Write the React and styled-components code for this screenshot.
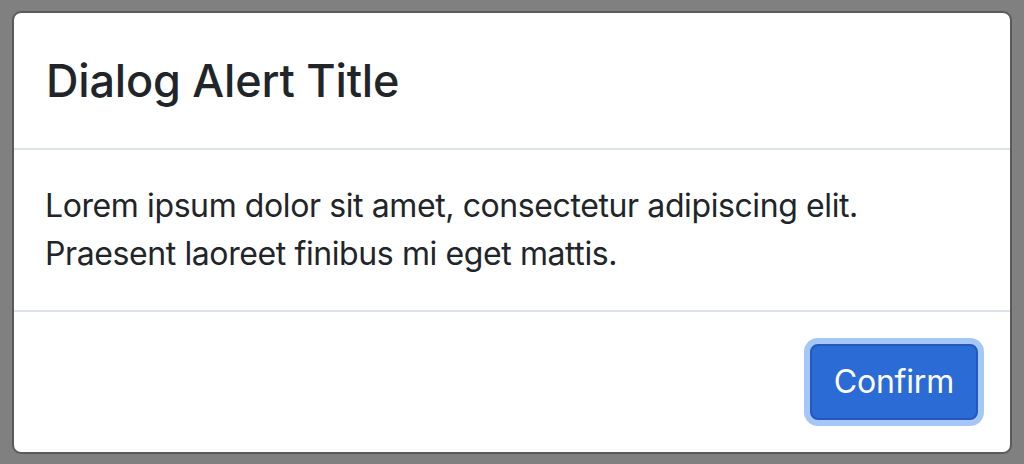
import React from 'react'
import styled, { createGlobalStyle } from 'styled-components'

const GlobalStyle = createGlobalStyle`
  html, body {
    margin: 0;
    padding: 0;
    background: #808080;
    font-family: Inter, "Noto Sans", "Liberation Sans", sans-serif;
    color: #212529;
  }
`

const Page = styled.div`
  width: 1024px;
  height: 464px;
  box-sizing: border-box;
  padding: 11px 12px 0 12px;
`

const StyledDialog = styled.div`
  display: flex;
  flex-direction: column;
  background: #fff;
  border: 2px solid #5a5a5a;
  border-radius: 9px;
  overflow: hidden;
`

const StyledHeader = styled.div`
  padding: 32px;
  border-bottom: 2px solid #dee2e6;
`

const StyledTitle = styled.h5`
  margin: 0;
  font-size: 45px;
  line-height: 71px;
  font-weight: 500;
  letter-spacing: -0.2px;
`

const StyledBody = styled.div`
  padding: 32px 32px 32px 31px;
  font-size: 32px;
  line-height: 48px;
  letter-spacing: -0.4px;
`

const StyledFooter = styled.div`
  display: flex;
  justify-content: flex-end;
  padding: 24px 24px 24px 24px;
  border-top: 2px solid #dee2e6;
`

const StyledButton = styled.button`
  margin: 8px;
  padding: 12px 22px;
  font-family: inherit;
  font-size: 32px;
  line-height: 48px;
  color: #fff;
  background: #2b6bd6;
  border: 2px solid #2459b9;
  border-radius: 8px;
  box-shadow: 0 0 0 6px #a5c7f7;
  letter-spacing: -0.2px;
`

export default function App() {
  return (
    <Page>
      <GlobalStyle />
      <StyledDialog>
        <StyledHeader>
          <StyledTitle>Dialog Alert Title</StyledTitle>
        </StyledHeader>
        <StyledBody>
          Lorem ipsum dolor sit amet, consectetur adipiscing elit.
          <br />
          Praesent laoreet finibus mi eget mattis.
        </StyledBody>
        <StyledFooter>
          <StyledButton>Confirm</StyledButton>
        </StyledFooter>
      </StyledDialog>
    </Page>
  )
}
